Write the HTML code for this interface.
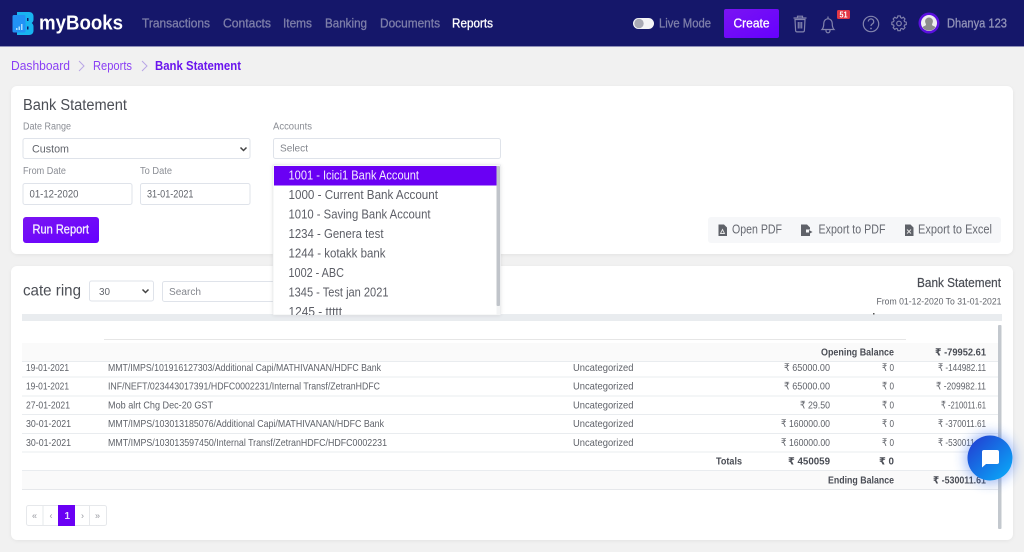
<!DOCTYPE html>
<html lang="en"><head><meta charset="utf-8"><title>Bank Statement</title>
<style>
html,body{margin:0;padding:0;width:1024px;height:552px;overflow:hidden;background:#f1f1f1}
svg{display:block;filter:blur(.3px)}
text{font-family:"Liberation Sans","DejaVu Sans",sans-serif;fill:#55585f;font-size:10px}
.nav{font-size:13px;fill:#7e7fa9;stroke:#7e7fa9;stroke-width:.3}
.it{font-size:12.500px;fill:#5c5e66}
.lb{font-size:10px;fill:#8a8d94}
.b{font-weight:bold;fill:#4a4d55;font-size:10px}
.r{font-size:10.500px;fill:#5f6269}
.ex{font-size:12.500px;fill:#666971}
</style></head><body>
<svg width="1024" height="552" viewBox="0 0 1024 552" xmlns="http://www.w3.org/2000/svg">
<defs>
<linearGradient id="g" x1="0" y1="0" x2="1" y2="1"><stop offset="0" stop-color="#2438d0"/><stop offset="1" stop-color="#07b0fb"/></linearGradient>
<linearGradient id="p" x1="0" y1="0" x2="1" y2="1"><stop offset="0" stop-color="#7a14f2"/><stop offset="1" stop-color="#6600ff"/></linearGradient>
<filter id="sh" x="-60%" y="-60%" width="220%" height="220%"><feGaussianBlur stdDeviation="6"/></filter>
<filter id="cs" x="-5%" y="-5%" width="110%" height="110%"><feGaussianBlur stdDeviation="2"/></filter>
<clipPath id="dd"><rect x="274" y="166" width="222" height="149"/></clipPath>
</defs>
<rect width="1024" height="552" fill="#f1f1f1"/>
<!-- Nav -->
<rect width="1024" height="46" fill="#15176a"/>
<rect y="46" width="1024" height="1" fill="#8f90b8"/>
<path d="M17 12h12c3 0 4.500 2 4.500 4.500v3c0 1.500-.7 2.800-1.800 3.500 1.100.7 1.800 2 1.800 3.500v4c0 2.500-1.500 4.500-4.500 4.500H17z" fill="#18b4f0"/>
<path d="M27 18h1.500v3H27zM27 26.500h1.500v3H27z" fill="#15176a"/>
<rect x="12.500" y="15" width="13" height="17.500" rx="1.500" fill="#2292f5"/>
<path d="M16 28h1.500v2H16zM18.500 26.500H20V30h-1.500zM21 24h1.500v6H21z" fill="#a8dcff"/>
<text x="39" y="29.500" textLength="84" lengthAdjust="spacingAndGlyphs" style="font-size:20px;font-weight:bold;fill:#fff">myBooks</text>
<text class="nav" x="142" y="27.500" textLength="68" lengthAdjust="spacingAndGlyphs">Transactions</text>
<text class="nav" x="223" y="27.500" textLength="48" lengthAdjust="spacingAndGlyphs">Contacts</text>
<text class="nav" x="283" y="27.500" textLength="29" lengthAdjust="spacingAndGlyphs">Items</text>
<text class="nav" x="325" y="27.500" textLength="42" lengthAdjust="spacingAndGlyphs">Banking</text>
<text class="nav" x="380" y="27.500" textLength="60" lengthAdjust="spacingAndGlyphs">Documents</text>
<text class="nav" x="452" y="27.500" textLength="41" lengthAdjust="spacingAndGlyphs" style="fill:#fff;stroke:#fff">Reports</text>
<rect x="633" y="18" width="21" height="11" rx="5.500" fill="#f4f4f6"/><circle cx="639" cy="23.500" r="4.700" fill="#a9aab4"/>
<text class="nav" x="659" y="27.500" textLength="52" lengthAdjust="spacingAndGlyphs">Live Mode</text>
<rect x="724" y="9" width="55" height="29" rx="2" fill="url(#p)"/>
<text x="733.500" y="27.500" textLength="36" lengthAdjust="spacingAndGlyphs" style="font-size:13px;fill:#fff;stroke:#fff;stroke-width:.3">Create</text>
<g fill="none" stroke="#8283ad" stroke-width="1.200">
<path d="M795 19.500h10l-.6 11a1.500 1.500 0 0 1-1.500 1.400h-5.800a1.500 1.500 0 0 1-1.500-1.400zM793.500 18h13M797.500 18v-1.800h5V18M798.300 22v6.500M800 22v6.500M801.700 22v6.500"/>
<path d="M822 29.500c1.500-1.500 1.800-3 1.800-6.500a4.200 4.200 0 0 1 8.400 0c0 3.500.3 5 1.800 6.500zM826 30v.8a2 2 0 0 0 4 0V30M828 16.500v2"/>
<circle cx="871" cy="24" r="7.700"/><path d="M868.300 21.500a2.700 2.700 0 1 1 4.100 2.400c-1 .6-1.400 1.100-1.400 2.100"/>
<path transform="translate(899 23.500) scale(.76) translate(-899 -24)" d="M897.500 14h3.200l.5 2.300 1.500.7 2-1.200 2.200 2.300-1.200 2 .6 1.500 2.300.6v3.200l-2.300.6-.6 1.500 1.200 2-2.200 2.200-2-1.200-1.500.6-.5 2.300h-3.200l-.5-2.300-1.500-.6-2 1.200-2.200-2.200 1.200-2-.6-1.500-2.300-.6v-3.200l2.300-.6.6-1.500-1.200-2 2.200-2.300 2 1.200 1.500-.7z" stroke-width="1.500"/>
<circle cx="899" cy="23.500" r="2.300"/>
</g>
<circle cx="871" cy="28.500" r=".9" fill="#8283ad"/>
<rect x="837" y="10" width="13" height="9" rx="1.500" fill="#e23745"/>
<text x="839.500" y="17.500" textLength="8" lengthAdjust="spacingAndGlyphs" style="font-size:8px;font-weight:bold;fill:#fff">51</text>
<circle cx="929" cy="23" r="10.500" fill="#5b10e0"/><circle cx="929" cy="23" r="8" fill="#eee"/>
<path d="M929 17.500a3.800 3.800 0 0 1 3.500 5.500c-.5 1.500-1 2 .5 2.800 1 .5 2 .8 2.500 1.500a8 8 0 0 1-13 0c.5-.7 1.500-1 2.500-1.500 1.500-.8 1-1.300.5-2.800a3.800 3.800 0 0 1 3.500-5.500z" fill="#8d8d8d"/>
<text class="nav" x="947" y="27.500" textLength="60" lengthAdjust="spacingAndGlyphs" style="fill:#9293b8;stroke:#9293b8">Dhanya 123</text>
<!-- Breadcrumb -->
<text x="11" y="70" textLength="59" lengthAdjust="spacingAndGlyphs" style="font-size:13px;fill:#8a3ff5">Dashboard</text>
<path d="M79 61l5 5-5 5M142 61l5 5-5 5" fill="none" stroke="#b9a6e6" stroke-width="1"/>
<text x="93" y="70" textLength="39" lengthAdjust="spacingAndGlyphs" style="font-size:13px;fill:#8a3ff5">Reports</text>
<text x="155" y="70" textLength="86" lengthAdjust="spacingAndGlyphs" style="font-size:12.500px;font-weight:bold;fill:#6a14ee">Bank Statement</text>
<!-- Card 1 -->
<rect x="11" y="87" width="1002" height="168" rx="7" fill="#000" opacity=".06" filter="url(#cs)"/>
<rect x="11" y="86" width="1002" height="168" rx="6" fill="#fff"/>
<text x="23" y="110" textLength="104" lengthAdjust="spacingAndGlyphs" style="font-size:15.500px;fill:#4b4e55">Bank Statement</text>
<text class="lb" x="23" y="129.500" textLength="48" lengthAdjust="spacingAndGlyphs">Date Range</text>
<text class="lb" x="273" y="129.500" textLength="39" lengthAdjust="spacingAndGlyphs">Accounts</text>
<rect x="23" y="138.500" width="227" height="20" rx="2" fill="#fff" stroke="#dfe3ea"/>
<text x="32" y="152.500" textLength="37" lengthAdjust="spacingAndGlyphs" style="font-size:11px;fill:#62656c">Custom</text>
<path d="M240.500 147.500l3 3 3-3" fill="none" stroke="#444" stroke-width="1.500"/>
<rect x="273.500" y="138.500" width="227" height="20" rx="2" fill="#fff" stroke="#dfe3ea"/>
<text x="280" y="151.500" textLength="28" lengthAdjust="spacingAndGlyphs" style="font-size:10px;fill:#83868d">Select</text>
<text class="lb" x="23" y="174" textLength="43" lengthAdjust="spacingAndGlyphs">From Date</text>
<text class="lb" x="140" y="174" textLength="32" lengthAdjust="spacingAndGlyphs">To Date</text>
<rect x="23" y="183.500" width="109" height="21" rx="2" fill="#fff" stroke="#dfe3ea"/>
<rect x="140.500" y="183.500" width="109.500" height="21" rx="2" fill="#fff" stroke="#dfe3ea"/>
<text x="29.500" y="197.500" textLength="49" lengthAdjust="spacingAndGlyphs" style="font-size:11px;fill:#62656c">01-12-2020</text>
<text x="147" y="197.500" textLength="46.500" lengthAdjust="spacingAndGlyphs" style="font-size:11px;fill:#62656c">31-01-2021</text>
<rect x="23" y="217" width="76" height="26" rx="3" fill="url(#p)"/>
<text x="32.500" y="233.500" textLength="56.500" lengthAdjust="spacingAndGlyphs" style="font-size:12.500px;fill:#f4eeff;stroke:#f4eeff;stroke-width:.3">Run Report</text>
<rect x="708" y="217" width="293" height="26" rx="3" fill="#f6f7f9"/>
<path d="M718.500 224.500h5.500l3 3v8.500h-8.500zM801 224.500h6l3 3v2h-4v3h4v3.500h-9zM905 224.500h5.500l3 3v8.500H905z" fill="#5f6269"/>
<path d="M809 230l3.500 2-3.500 2z" fill="#5f6269"/>
<path d="M720.500 233.500l2-4 2 4zM907 229.500l4 4M911 229.500l-4 4" fill="none" stroke="#e8e8e8" stroke-width=".9"/>
<text class="ex" x="732" y="233.500" textLength="50" lengthAdjust="spacingAndGlyphs">Open PDF</text>
<text class="ex" x="818.500" y="233.500" textLength="67" lengthAdjust="spacingAndGlyphs">Export to PDF</text>
<text class="ex" x="918" y="233.500" textLength="74" lengthAdjust="spacingAndGlyphs">Export to Excel</text>
<!-- Card 2 -->
<rect x="11" y="267" width="1002" height="274" rx="7" fill="#000" opacity=".06" filter="url(#cs)"/>
<rect x="11" y="266" width="1002" height="274" rx="6" fill="#fff"/>
<text x="23" y="295.500" textLength="58" lengthAdjust="spacingAndGlyphs" style="font-size:16px;fill:#4b4e55">cate ring</text>
<rect x="89.500" y="281" width="64" height="20" rx="2" fill="#fff" stroke="#dfe3ea"/>
<text x="99" y="295" textLength="11" lengthAdjust="spacingAndGlyphs" style="font-size:10.500px;fill:#62656c">30</text>
<path d="M142.500 289.500l3 3 3-3" fill="none" stroke="#444" stroke-width="1.500"/>
<rect x="162.500" y="281.500" width="130" height="20" rx="2" fill="#fff" stroke="#dfe3ea"/>
<text x="169" y="295" textLength="32" lengthAdjust="spacingAndGlyphs" style="font-size:10px;fill:#83868d">Search</text>
<text x="917" y="287" textLength="84" lengthAdjust="spacingAndGlyphs" style="font-size:12.500px;fill:#4a4d55;stroke:#4a4d55;stroke-width:.2">Bank Statement</text>
<text x="876.500" y="304.500" textLength="125" lengthAdjust="spacingAndGlyphs" style="font-size:9.500px;fill:#62656c">From 01-12-2020 To 31-01-2021</text>
<rect x="22" y="314" width="980" height="7" fill="#e9ecef"/>
<rect x="873" y="313" width="1.500" height="1.500" fill="#555"/>
<rect x="104" y="339" width="802" height="1" fill="#e6e6e6"/>
<rect x="22" y="343" width="976" height="18" fill="#fafafa"/>
<rect x="22" y="361" width="976" height="1" fill="#e9ecef"/>
<rect x="22" y="376.500" width="976" height="1" fill="#e9ecef"/>
<rect x="22" y="395.500" width="976" height="1" fill="#e9ecef"/>
<rect x="22" y="414" width="976" height="1" fill="#e9ecef"/>
<rect x="22" y="433" width="976" height="1" fill="#e9ecef"/>
<rect x="22" y="451.500" width="976" height="1" fill="#e9ecef"/>
<rect x="22" y="470" width="976" height="19" fill="#fafafa"/>
<rect x="22" y="470" width="976" height="1" fill="#e9ecef"/>
<rect x="22" y="489" width="976" height="1" fill="#e6e8eb"/>
<rect x="998" y="325" width="3.500" height="204" rx="1" fill="#c3c8ce"/>
<text class="b" x="821" y="355.500" textLength="73" lengthAdjust="spacingAndGlyphs">Opening Balance</text>
<text class="b" x="935" y="355.500" textLength="51" lengthAdjust="spacingAndGlyphs">₹ -79952.61</text>
<text class="r" x="26" y="371" textLength="43" lengthAdjust="spacingAndGlyphs">19-01-2021</text>
<text class="r" x="108" y="371" textLength="273" lengthAdjust="spacingAndGlyphs">MMT/IMPS/101916127303/Additional Capi/MATHIVANAN/HDFC Bank</text>
<text class="r" x="573" y="371" textLength="60.500" lengthAdjust="spacingAndGlyphs">Uncategorized</text>
<text class="r" x="784" y="371" textLength="46" lengthAdjust="spacingAndGlyphs">₹ 65000.00</text>
<text class="r" x="882" y="371" textLength="12" lengthAdjust="spacingAndGlyphs">₹ 0</text>
<text class="r" x="938" y="371" textLength="48" lengthAdjust="spacingAndGlyphs">₹ -144982.11</text>
<text class="r" x="26" y="389.500" textLength="43" lengthAdjust="spacingAndGlyphs">19-01-2021</text>
<text class="r" x="108" y="389.500" textLength="272" lengthAdjust="spacingAndGlyphs">INF/NEFT/023443017391/HDFC0002231/Internal Transf/ZetranHDFC</text>
<text class="r" x="573" y="389.500" textLength="60.500" lengthAdjust="spacingAndGlyphs">Uncategorized</text>
<text class="r" x="784" y="389.500" textLength="46" lengthAdjust="spacingAndGlyphs">₹ 65000.00</text>
<text class="r" x="882" y="389.500" textLength="12" lengthAdjust="spacingAndGlyphs">₹ 0</text>
<text class="r" x="936" y="389.500" textLength="50" lengthAdjust="spacingAndGlyphs">₹ -209982.11</text>
<text class="r" x="26" y="408.500" textLength="44" lengthAdjust="spacingAndGlyphs">27-01-2021</text>
<text class="r" x="108" y="408.500" textLength="105" lengthAdjust="spacingAndGlyphs">Mob alrt Chg Dec-20 GST</text>
<text class="r" x="573" y="408.500" textLength="60.500" lengthAdjust="spacingAndGlyphs">Uncategorized</text>
<text class="r" x="800" y="408.500" textLength="30" lengthAdjust="spacingAndGlyphs">₹ 29.50</text>
<text class="r" x="882" y="408.500" textLength="12" lengthAdjust="spacingAndGlyphs">₹ 0</text>
<text class="r" x="941" y="408.500" textLength="45" lengthAdjust="spacingAndGlyphs">₹ -210011.61</text>
<text class="r" x="26" y="427" textLength="45" lengthAdjust="spacingAndGlyphs">30-01-2021</text>
<text class="r" x="108" y="427" textLength="276" lengthAdjust="spacingAndGlyphs">MMT/IMPS/103013185076/Additional Capi/MATHIVANAN/HDFC Bank</text>
<text class="r" x="573" y="427" textLength="60.500" lengthAdjust="spacingAndGlyphs">Uncategorized</text>
<text class="r" x="781" y="427" textLength="49" lengthAdjust="spacingAndGlyphs">₹ 160000.00</text>
<text class="r" x="882" y="427" textLength="12" lengthAdjust="spacingAndGlyphs">₹ 0</text>
<text class="r" x="938" y="427" textLength="48" lengthAdjust="spacingAndGlyphs">₹ -370011.61</text>
<text class="r" x="26" y="446" textLength="45" lengthAdjust="spacingAndGlyphs">30-01-2021</text>
<text class="r" x="108" y="446" textLength="279" lengthAdjust="spacingAndGlyphs">MMT/IMPS/103013597450/Internal Transf/ZetranHDFC/HDFC0002231</text>
<text class="r" x="573" y="446" textLength="60.500" lengthAdjust="spacingAndGlyphs">Uncategorized</text>
<text class="r" x="781" y="446" textLength="49" lengthAdjust="spacingAndGlyphs">₹ 160000.00</text>
<text class="r" x="882" y="446" textLength="12" lengthAdjust="spacingAndGlyphs">₹ 0</text>
<text class="r" x="938" y="446" textLength="48" lengthAdjust="spacingAndGlyphs">₹ -530011.61</text>
<text class="b" x="716" y="464.500" textLength="26" lengthAdjust="spacingAndGlyphs">Totals</text>
<text class="b" x="788" y="464.500" textLength="42" lengthAdjust="spacingAndGlyphs">₹ 450059</text>
<text class="b" x="879" y="464.500" textLength="15" lengthAdjust="spacingAndGlyphs">₹ 0</text>
<text class="b" x="828" y="483.500" textLength="66" lengthAdjust="spacingAndGlyphs">Ending Balance</text>
<text class="b" x="933" y="483.500" textLength="53" lengthAdjust="spacingAndGlyphs">₹ -530011.61</text>
<!-- Pagination -->
<rect x="26.500" y="505.500" width="80" height="20" rx="2" fill="#fff" stroke="#e6e8eb"/>
<path d="M43 505.500v20M89.500 505.500v20" stroke="#e6e8eb" fill="none"/>
<rect x="58" y="505" width="17" height="21" fill="#6a00f4"/>
<text x="32" y="518.500" style="font-size:9px;fill:#9a9ca3">«</text>
<text x="49.500" y="518.500" style="font-size:9px;fill:#9a9ca3">‹</text>
<text x="64.500" y="519" style="font-size:10px;font-weight:bold;fill:#e8dcff">1</text>
<text x="81" y="518.500" style="font-size:9px;fill:#9a9ca3">›</text>
<text x="95" y="518.500" style="font-size:9px;fill:#9a9ca3">»</text>
<!-- Dropdown -->
<rect x="273" y="165" width="227.500" height="150" fill="#000" opacity=".12" filter="url(#cs)"/>
<rect x="273" y="165" width="227.500" height="150" fill="#fff" stroke="#e4e6ea" stroke-width=".6"/>
<rect x="274" y="166" width="222.500" height="19.500" fill="#6a00f4"/>
<rect x="496.500" y="166" width="4" height="149" fill="#f3f4f5"/>
<rect x="496.500" y="166" width="3.500" height="140" rx="1" fill="#c0c4ca"/>
<g clip-path="url(#dd)">
<text class="it" x="288.500" y="179.500" textLength="130.500" lengthAdjust="spacingAndGlyphs" style="fill:#f3ecff">1001 - Icici1 Bank Account</text>
<text class="it" x="288.500" y="199" textLength="149.500" lengthAdjust="spacingAndGlyphs">1000 - Current Bank Account</text>
<text class="it" x="288.500" y="218.500" textLength="142" lengthAdjust="spacingAndGlyphs">1010 - Saving Bank Account</text>
<text class="it" x="288.500" y="238" textLength="95" lengthAdjust="spacingAndGlyphs">1234 - Genera test</text>
<text class="it" x="288.500" y="257.500" textLength="97" lengthAdjust="spacingAndGlyphs">1244 - kotakk bank</text>
<text class="it" x="288.500" y="277" textLength="55.500" lengthAdjust="spacingAndGlyphs">1002 - ABC</text>
<text class="it" x="288.500" y="296.500" textLength="100" lengthAdjust="spacingAndGlyphs">1345 - Test jan 2021</text>
<text class="it" x="288.500" y="316" textLength="53.500" lengthAdjust="spacingAndGlyphs">1245 - ttttt</text>
</g>
<!-- Chat -->
<circle cx="990" cy="458" r="25" fill="#2d6cf0" opacity=".45" filter="url(#sh)"/>
<circle cx="990" cy="458" r="22.500" fill="url(#g)"/>
<path d="M984 450h13a2 2 0 0 1 2 2v10a2 2 0 0 1-2 2h-11l-4 3.500V452a2 2 0 0 1 2-2z" fill="#fff"/>
</svg>
</body></html>
